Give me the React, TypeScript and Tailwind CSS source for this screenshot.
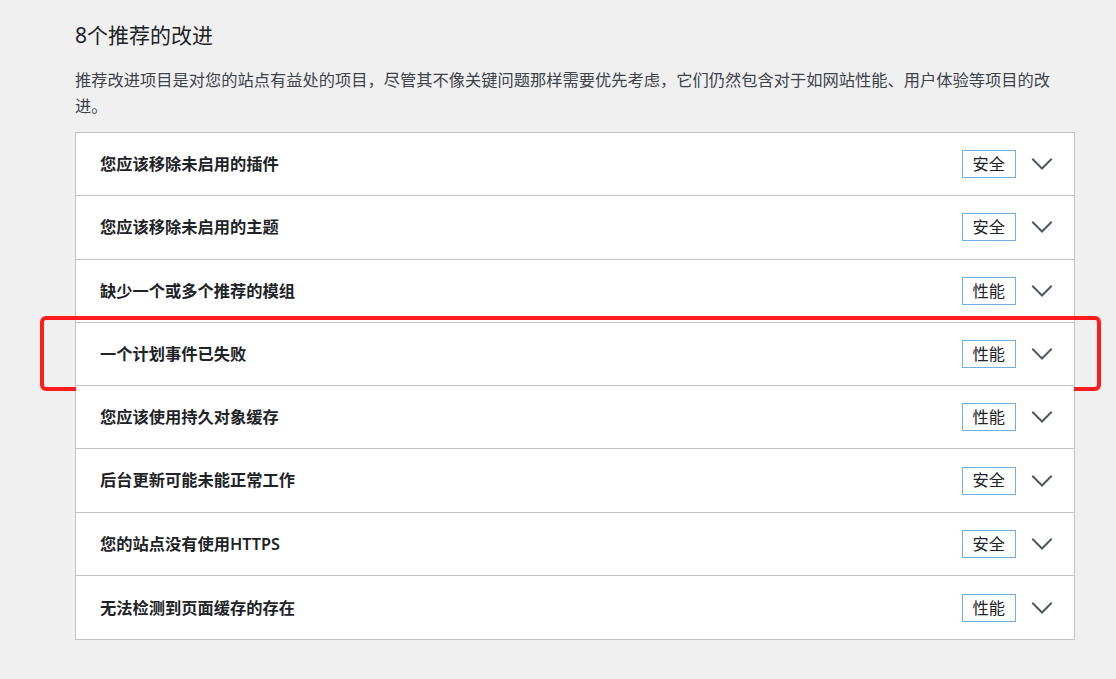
import type { FC } from "react";

type Item = {
  title: string;
  badge: "安全" | "性能";
  highlighted?: boolean;
};

const items: Item[] = [
  { title: "您应该移除未启用的插件", badge: "安全" },
  { title: "您应该移除未启用的主题", badge: "安全" },
  { title: "缺少一个或多个推荐的模组", badge: "性能" },
  { title: "一个计划事件已失败", badge: "性能", highlighted: true },
  { title: "您应该使用持久对象缓存", badge: "性能" },
  { title: "后台更新可能未能正常工作", badge: "安全" },
  { title: "您的站点没有使用HTTPS", badge: "安全" },
  { title: "无法检测到页面缓存的存在", badge: "性能" },
];

const Chevron: FC = () => (
  <svg viewBox="0 0 24 24" className="h-6 w-6" fill="none" aria-hidden="true">
    <polyline
      points="3 7.5 12 16.5 21 7.5"
      stroke="#50575e"
      strokeWidth="2"
      strokeLinecap="square"
      strokeLinejoin="miter"
    />
  </svg>
);

const Row: FC<{ item: Item; last: boolean }> = ({ item, last }) => (
  <div
    className={`relative flex h-[63.3px] items-center bg-white pl-6 pr-5 ${
      last ? "" : "border-b border-[#c3c4c7]"
    }`}
  >
    <span className="flex-1 text-[16.25px] font-semibold text-[#1d2327]">
      {item.title}
    </span>
    <span className="flex h-7 items-center border border-[#72aee6] px-[10px] text-[16.25px] text-[#1d2327]">
      {item.badge}
    </span>
    <span className="ml-[14px] flex items-center">
      <Chevron />
    </span>

    {item.highlighted && (
      <div className="pointer-events-none absolute -top-[7px] -bottom-[6px] -left-[36px] -right-[27px] rounded-[6px] border-4 border-[#ff1c1c]" />
    )}
  </div>
);

export default function App() {
  return (
    <div
      className="min-h-[679px] w-full bg-[#f0f0f1] pl-[75px] pt-[21px]"
      style={{ fontFamily: '"Noto Sans", "Noto Sans CJK SC", sans-serif' }}
    >
      <h2 className="text-[21px] leading-[29px] font-normal text-[#1d2327]">
        8个推荐的改进
      </h2>
      <p className="mt-[17px] w-[1000px] text-[16.25px] leading-[26px] text-[#3c434a]">
        推荐改进项目是对您的站点有益处的项目，尽管其不像关键问题那样需要优先考虑，它们仍然包含对于如网站性能、用户体验等项目的改进。
      </p>
      <div className="mt-[13px] w-[1000px] border border-[#c3c4c7]">
        {items.map((item, i) => (
          <Row key={item.title} item={item} last={i === items.length - 1} />
        ))}
      </div>
    </div>
  );
}
